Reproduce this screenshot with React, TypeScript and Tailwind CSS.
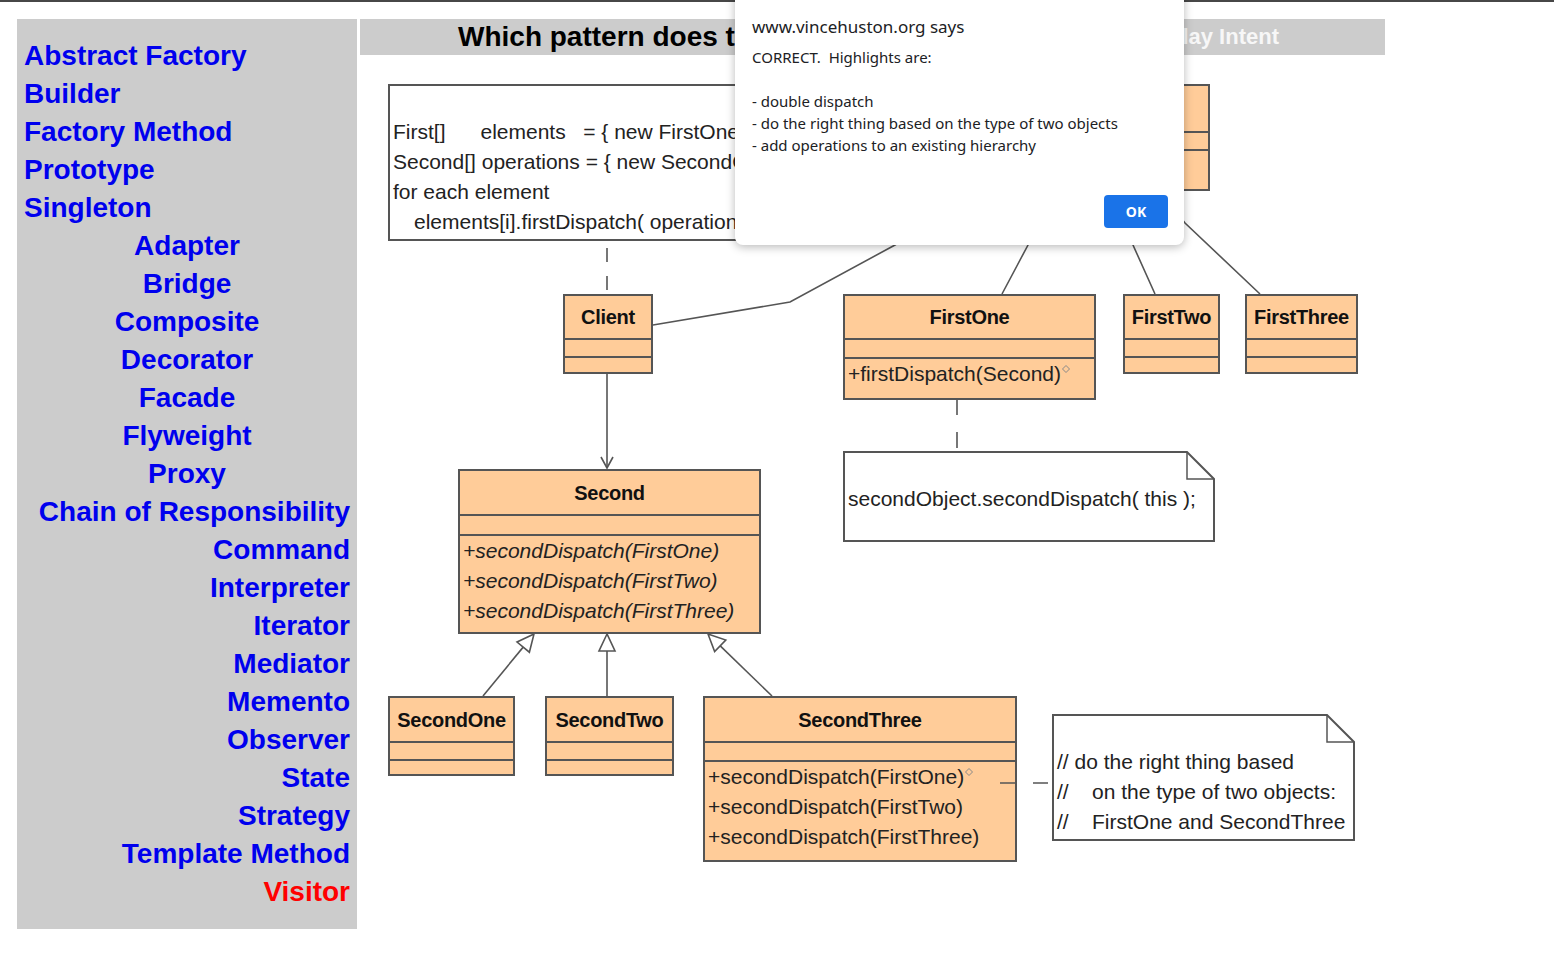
import type { ReactNode } from 'react'

const LEFT = ['Abstract Factory', 'Builder', 'Factory Method', 'Prototype', 'Singleton']
const CENTER = ['Adapter', 'Bridge', 'Composite', 'Decorator', 'Facade', 'Flyweight', 'Proxy']
const RIGHT = [
  'Chain of Responsibility',
  'Command',
  'Interpreter',
  'Iterator',
  'Mediator',
  'Memento',
  'Observer',
  'State',
  'Strategy',
  'Template Method',
]

// hollow inheritance triangle, apex at the parent, pointing away from the tail
function triangle(ax: number, ay: number, tx: number, ty: number) {
  const dx = tx - ax
  const dy = ty - ay
  const d = Math.hypot(dx, dy)
  const ux = dx / d
  const uy = dy / d
  const bx = ax + ux * 17
  const by = ay + uy * 17
  const px = -uy * 8
  const py = ux * 8
  return {
    points: `${ax},${ay} ${bx + px},${by + py} ${bx - px},${by - py}`,
    bx,
    by,
  }
}

function Diamond() {
  return (
    <svg width="8" height="8" viewBox="0 0 8 8" className="ml-[1px] inline-block align-top mt-[6px]">
      <path d="M4 0.5 L7.5 4 L4 7.5 L0.5 4 Z" fill="none" stroke="#888" strokeWidth="1" />
    </svg>
  )
}

function ClassBox({
  pos,
  name,
  nameH,
  attrH,
  children,
}: {
  pos: string
  name: string
  nameH: string
  attrH: string
  children?: ReactNode
}) {
  return (
    <div className={`absolute flex flex-col border-2 border-[#555] bg-[#ffcc99] ${pos}`}>
      <div className={`flex items-center justify-center border-b-2 border-[#555] text-[20px] font-bold tracking-[-0.3px] text-[#111] ${nameH}`}>
        {name}
      </div>
      <div className={`border-b-2 border-[#555] ${attrH}`} />
      <div className="flex-1 overflow-hidden whitespace-nowrap pl-[3px] text-[21px] leading-[30px] text-[#222]">{children}</div>
    </div>
  )
}

function Fold() {
  return (
    <svg width="29" height="29" viewBox="0 0 29 29" className="absolute -right-[2px] -top-[2px]">
      <polygon points="0,0 29,0 29,29" fill="#fff" />
      <polyline points="0,1 1,1 28,28 28,29" fill="none" stroke="#555" strokeWidth="2" />
      <polyline points="1,1 1,28 28,28" fill="none" stroke="#555" strokeWidth="1.5" />
    </svg>
  )
}

function Diagram() {
  const t1 = triangle(534, 634, 483, 696)
  const t2 = triangle(607, 634, 607, 696)
  const t3 = triangle(708, 634, 772, 696)
  return (
    <div className="relative h-[874px] text-[#222]">
      <svg width="1025" height="874" viewBox="360 55 1025 874" className="absolute left-0 top-0">
        <g stroke="#555" strokeWidth="1.6" fill="none">
          <line x1="607" y1="248" x2="607" y2="294" strokeDasharray="14 14" />
          <polyline points="653,325 790,302 895,245 975,191" />
          <polyline points="1002,294 1028,245 1040,191" />
          <polyline points="1155,294 1133,245 1115,191" />
          <polyline points="1260,294 1185,223 1160,191" />
          <line x1="607" y1="373" x2="607" y2="467" />
          <polyline points="601,457 607,468 613,457" />
          <line x1="957" y1="399" x2="957" y2="451" strokeDasharray="16 17" />
          <line x1="483" y1="696" x2={t1.bx} y2={t1.by} />
          <polygon points={t1.points} fill="#fff" />
          <line x1="607" y1="696" x2={t2.bx} y2={t2.by} />
          <polygon points={t2.points} fill="#fff" />
          <line x1="772" y1="696" x2={t3.bx} y2={t3.by} />
          <polygon points={t3.points} fill="#fff" />
        </g>
      </svg>

      <div className="absolute left-[28px] top-[29px] h-[157px] w-[572px] overflow-hidden whitespace-pre border-2 border-[#555] bg-white pl-[3px] pt-[31px] text-[21px] leading-[30px]">
        <div>{'First[]      elements   = { new FirstOne(), new FirstTwo(), new FirstThree() };'}</div>
        <div>{'Second[] operations = { new SecondOne(), new SecondTwo(), new SecondThree() };'}</div>
        <div>for each element</div>
        <div className="pl-[21px]">{'elements[i].firstDispatch( operations[j] );'}</div>
      </div>

      <ClassBox pos="left-[605px] top-[29px] h-[107px] w-[245px]" name="First" nameH="h-[47px]" attrH="h-[18px]">
        <div className="italic">+firstDispatch(Second)</div>
      </ClassBox>

      <ClassBox pos="left-[203px] top-[239px] h-[80px] w-[90px]" name="Client" nameH="h-[44px]" attrH="h-[18px]" />

      <ClassBox pos="left-[483px] top-[239px] h-[106px] w-[253px]" name="FirstOne" nameH="h-[44px]" attrH="h-[19px]">
        <div>
          +firstDispatch(Second)
          <Diamond />
        </div>
      </ClassBox>

      <ClassBox pos="left-[763px] top-[239px] h-[80px] w-[97px]" name="FirstTwo" nameH="h-[44px]" attrH="h-[18px]" />
      <ClassBox pos="left-[885px] top-[239px] h-[80px] w-[113px]" name="FirstThree" nameH="h-[44px]" attrH="h-[18px]" />

      <div className="absolute left-[483px] top-[396px] h-[91px] w-[372px] whitespace-pre border-2 border-[#555] bg-white pl-[3px] pt-[31px] text-[21px] leading-[30px]">
        secondObject.secondDispatch( this );
        <Fold />
      </div>

      <ClassBox pos="left-[98px] top-[414px] h-[165px] w-[303px]" name="Second" nameH="h-[45px]" attrH="h-[20px]">
        <div className="italic">+secondDispatch(FirstOne)</div>
        <div className="italic">+secondDispatch(FirstTwo)</div>
        <div className="italic">+secondDispatch(FirstThree)</div>
      </ClassBox>

      <ClassBox pos="left-[28px] top-[641px] h-[80px] w-[127px]" name="SecondOne" nameH="h-[45px]" attrH="h-[18px]" />
      <ClassBox pos="left-[185px] top-[641px] h-[80px] w-[129px]" name="SecondTwo" nameH="h-[45px]" attrH="h-[18px]" />

      <ClassBox pos="left-[343px] top-[641px] h-[166px] w-[314px]" name="SecondThree" nameH="h-[45px]" attrH="h-[19px]">
        <div>
          +secondDispatch(FirstOne)
          <Diamond />
        </div>
        <div>+secondDispatch(FirstTwo)</div>
        <div>+secondDispatch(FirstThree)</div>
      </ClassBox>

      <svg width="60" height="4" viewBox="0 0 60 4" className="absolute left-[640px] top-[726px]">
        <line x1="0" y1="2" x2="52" y2="2" stroke="#555" strokeWidth="1.6" strokeDasharray="15 18" />
      </svg>

      <div className="absolute left-[692px] top-[659px] h-[127px] w-[303px] whitespace-pre border-2 border-[#555] bg-white pl-[3px] pt-[31px] text-[21px] leading-[30px]">
        <div>{'// do the right thing based'}</div>
        <div>{'//    on the type of two objects:'}</div>
        <div>{'//    FirstOne and SecondThree'}</div>
        <Fold />
      </div>
    </div>
  )
}

function Alert() {
  return (
    <div className="absolute left-[735px] top-[-12px] h-[257px] w-[449px] rounded-[8px] bg-white pl-[17px] pt-[27px] font-['Noto_Sans',sans-serif] text-[#202124] shadow-[0_2px_10px_rgba(0,0,0,0.28)]">
      <div className="text-[17px] leading-[24px]">www.vincehuston.org says</div>
      <div className="mt-[7px] whitespace-pre-wrap text-[15px] leading-[22px]">
        <div>{'CORRECT.  Highlights are:'}</div>
        <div>&nbsp;</div>
        <div>- double dispatch</div>
        <div>- do the right thing based on the type of two objects</div>
        <div>- add operations to an existing hierarchy</div>
      </div>
      <button className="absolute bottom-[17px] right-[16px] h-[33px] w-[64px] rounded-[4px] bg-[#1a73e8] text-[14px] font-bold text-white">
        OK
      </button>
    </div>
  )
}

export default function App() {
  return (
    <div className="relative h-[956px] w-[1554px] overflow-hidden bg-white font-['Liberation_Sans',Arial,sans-serif]">
      <div className="h-[2px] bg-[#474747]" />
      <div className="flex pl-[17px] pt-[17px]">
        <nav className="flex h-[910px] w-[340px] flex-col bg-[#cccccc] px-[7px] pt-[18px] text-[28px] font-bold leading-[38px] text-[#0000ee]">
          {LEFT.map((n) => (
            <a key={n} className="self-start">
              {n}
            </a>
          ))}
          {CENTER.map((n) => (
            <a key={n} className="self-center">
              {n}
            </a>
          ))}
          {RIGHT.map((n) => (
            <a key={n} className="self-end">
              {n}
            </a>
          ))}
          <a className="self-end text-[#ff0000]">Visitor</a>
        </nav>
        <div className="ml-[3px] w-[1025px]">
          <div className="flex h-[36px] items-center whitespace-nowrap bg-[#cccccc] leading-[36px]">
            <span className="ml-[98px] text-[28px] font-bold text-black">Which pattern does this diagram represent?</span>
            <span className="ml-auto mr-[106px] text-[22px] font-bold text-[#f7f7f7]">Display Intent</span>
          </div>
          <Diagram />
        </div>
      </div>
      <Alert />
    </div>
  )
}
